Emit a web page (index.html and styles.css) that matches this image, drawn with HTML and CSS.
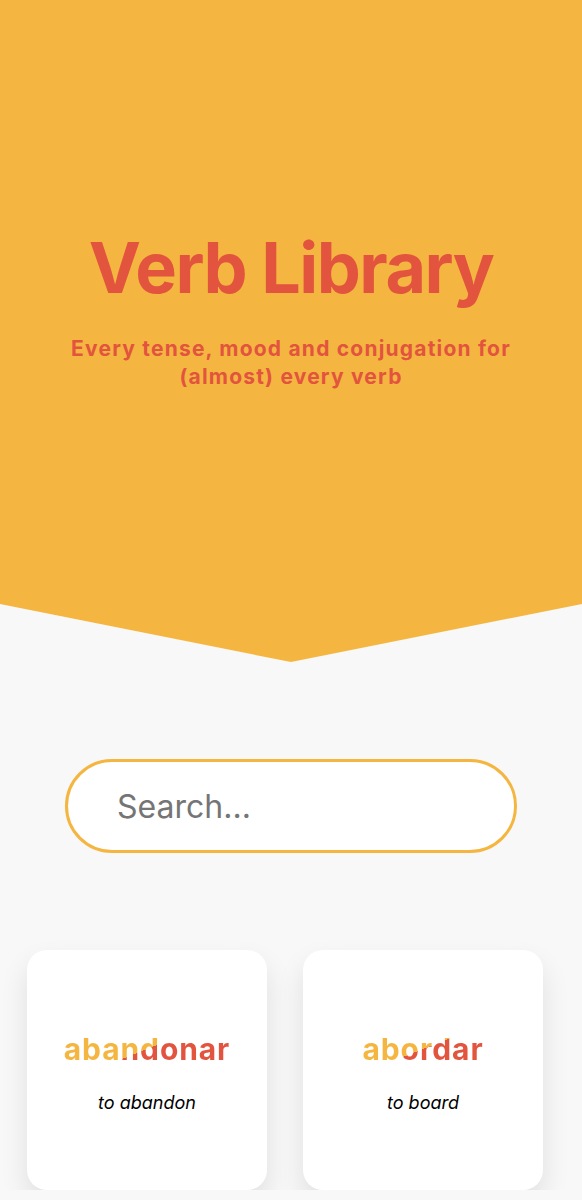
FILE: index.html
```html
<!DOCTYPE html>
<html lang="en">
<head>
<meta charset="utf-8">
<title>Verb Library</title>
<link rel="stylesheet" href="styles.css">
</head>
<body>
<header class="hero">
  <h1 class="hero-title">Verb Library</h1>
  <p class="hero-sub">Every tense, mood and conjugation for (almost) every verb</p>
</header>
<main class="content">
  <div class="search">
    <input class="search-input" type="text" placeholder="Search...">
  </div>
  <div class="cards">
    <div class="card">
      <span class="verb">abandonar</span>
      <span class="meaning">to abandon</span>
    </div>
    <div class="card">
      <span class="verb">abordar</span>
      <span class="meaning">to board</span>
    </div>
  </div>
</main>
</body>
</html>
```
FILE: styles.css
```css
* { box-sizing: border-box; }
html, body { margin: 0; padding: 0; }
body {
  background: #f8f8f8;
  font-family: Inter, "Noto Sans", sans-serif;
  overflow: hidden;
}
.hero {
  height: 662px;
  background: #f4b640;
  clip-path: polygon(0 0, 100% 0, 100% 604px, 50% 100%, 0 604px);
  padding-top: 233px;
  text-align: center;
  color: #e3543f;
}
.hero-title {
  margin: 0;
  font-size: 70px;
  line-height: 70px;
  font-weight: 700;
  letter-spacing: -1.5px;
}
.hero-sub {
  margin: 32px auto 0;
  width: 470px;
  font-size: 21px;
  line-height: 28px;
  font-weight: 700;
  letter-spacing: 1.2px;
}
.content {
  padding-top: 97px;
}
.search {
  display: flex;
  justify-content: center;
}
.search-input {
  width: 452px;
  height: 94px;
  border: 3px solid #f4b640;
  border-radius: 47px;
  background: #fff;
  padding: 0 0 0 49px;
  font-family: Inter, "Noto Sans", sans-serif;
  font-size: 32px;
  color: #333;
  outline: none;
}
.search-input::placeholder { color: #757575; }
.cards {
  display: grid;
  grid-template-columns: 240px 240px;
  gap: 36px;
  padding: 97px 0 0 27px;
}
.card {
  height: 240px;
  background: #fff;
  border-radius: 20px;
  box-shadow: 0 14px 28px rgba(0, 0, 0, 0.1);
  display: flex;
  flex-direction: column;
  align-items: center;
  padding-top: 82px;
}
.verb {
  font-size: 30px;
  line-height: 34px;
  font-weight: 700;
  letter-spacing: 0.9px;
  background: linear-gradient(158deg, #f4b640 50%, #e3543f 50%);
  -webkit-background-clip: text;
  background-clip: text;
  color: transparent;
}
.meaning {
  margin-top: 26px;
  font-size: 18px;
  line-height: 22px;
  font-style: italic;
  color: #000;
}
```
